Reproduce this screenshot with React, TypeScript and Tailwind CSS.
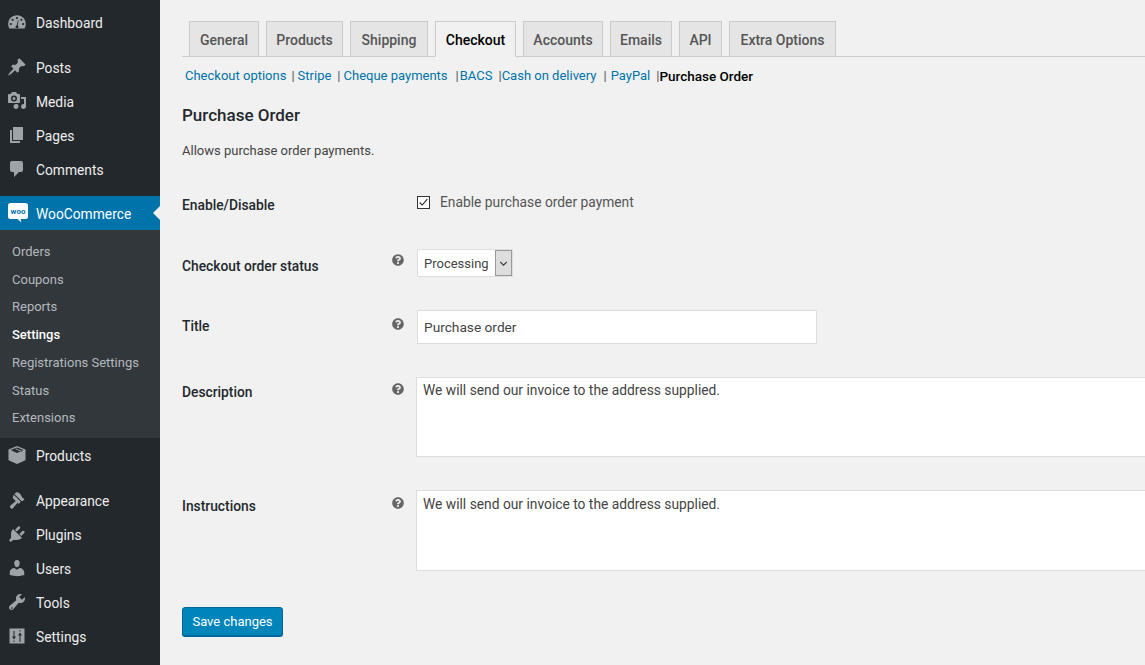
import React from "react";
import { FaQuestionCircle } from "react-icons/fa";

const S = "w-5 h-5 fill-[#9ea3a8]";
const Icons: Record<string, React.ReactNode> = {
  dashboard: (
    <svg viewBox="0 0 20 20" className={S}><path fillRule="evenodd" d="M10 3.2C5 3.2 1.2 7 1.2 12c0 1.7.5 3.3 1.3 4.6h15c.8-1.3 1.3-2.9 1.3-4.6 0-5-3.800-8.800-8.800-8.800zM10 5a1.100 1.100 0 110 2.200A1.100 1.100 0 0110 5zM5.600 6.700a1.100 1.100 0 110 2.200 1.100 1.100 0 010-2.200zm8.800 0a1.100 1.100 0 110 2.200 1.100 1.100 0 010-2.200zM3.800 11a1.100 1.100 0 110 2.200 1.100 1.100 0 010-2.200zm12.400 0a1.100 1.100 0 110 2.200 1.100 1.100 0 010-2.200zM11 8l.6.2-.9 5.400c.5.3.8.8.8 1.400 0 .5-.2.8-.5 1.100H9c-.3-.3-.5-.6-.5-1.100 0-.8.6-1.400 1.200-1.500z" /></svg>
  ),
  posts: (
    <svg viewBox="0 0 20 20" className={S}><path d="M10.440 3.020l1.820-1.820 6.360 6.350-1.830 1.820c-1.050-.68-2.480-.57-3.410.36l-.75.75c-.92.93-1.040 2.350-.35 3.410l-1.830 1.820-2.410-2.410-2.800 2.790c-.42.42-3.380 2.710-3.800 2.290s1.860-3.390 2.280-3.810l2.790-2.790L4.100 9.360l1.830-1.820c1.050.69 2.480.57 3.400-.36l.75-.75c.93-.92 1.050-2.350.36-3.410z" /></svg>
  ),
  media: (
    <svg viewBox="0 0 20 20" className={S}><path fillRule="evenodd" d="M13 11V4c0-.55-.45-1-1-1h-1.670L9 1H5L3.670 3H2c-.55 0-1 .45-1 1v7c0 .55.45 1 1 1h10c.55 0 1-.45 1-1zM7 4.500a3 3 0 110 6 3 3 0 010-6zM7 6a1.500 1.500 0 100 3 1.500 1.500 0 000-3zm7 0h5v9.500c0 1.400-1.100 2.500-2.500 2.500S14 16.900 14 15.500s1.100-2.500 2.500-2.500c.2 0 .3 0 .5.1V8h-3zM9.500 13c1.100 0 2 .9 2 2.300v.2c0 1.400-1.100 2.500-2.500 2.500S6.500 16.900 6.500 15.500 7.600 13 9 13z" /></svg>
  ),
  pages: (
    <svg viewBox="0 0 20 20" className={S}><path d="M6 15V2h10v13H6zm-1 1h8v2H3V5h2v11z" /></svg>
  ),
  comments: (
    <svg viewBox="0 0 20 20" className={S}><path d="M5 2h9c1.100 0 2 .9 2 2v7c0 1.100-.9 2-2 2h-2l-5 5v-5H5c-1.100 0-2-.9-2-2V4c0-1.100.9-2 2-2z" /></svg>
  ),
  products: (
    <svg viewBox="0 0 20 20" className={S}><path fillRule="evenodd" d="M10 1l8.500 3.600v10.600L10 19l-8.500-3.800V4.600zM3.600 5.100L10 7.900l6.400-2.800L10 2.600zM8 4l6.300 2.700 1-.5L9 3.500z" /></svg>
  ),
  appearance: (
    <svg viewBox="0 0 20 20" className={S}><path d="M14.480 11.060L7.410 3.990l1.500-1.500c.5-.56 2.300-.47 3.540.79 1.250 1.250 2.500 3.330 2.530 3.770.04.440 1.400 1.400 2.560 2.120l-1.800 1.800c-.3.020-1.260.090-1.260.090zM6.700 4.700l7.070 7.070-2.120 2.120-1.060-1.060c-.44.440-3.880 4.600-4.950 5.660-1.060 1.060-3.530-1.410-2.470-2.470 1.060-1.060 5.220-4.510 5.660-4.950L7.770 10.010 5.650 7.890z" /></svg>
  ),
  plugins: (
    <svg viewBox="0 0 20 20" className={S}><path d="M13.110 4.360L9.870 7.600 8 5.730l3.240-3.240c.35-.34 1.050-.2 1.560.32.520.51.660 1.210.31 1.550zm-8 1.770l.91-1.120 9.010 9.010-1.190.84c-.71.710-2.630 1.160-3.820 1.160H6.140L4.900 17.260c-.59.590-1.540.59-2.120 0-.59-.58-.59-1.530 0-2.120l1.240-1.240v-3.880c0-1.130.37-3.180 1.090-3.890zm7.260 3.970l3.240-3.240c.34-.35 1.040-.21 1.550.31.520.51.660 1.210.31 1.550l-3.240 3.250z" /></svg>
  ),
  users: (
    <svg viewBox="0 0 20 20" className={S}><path d="M10 9.250c-2.270 0-2.730-3.440-2.730-3.440C7 4.020 7.820 2 9.970 2c2.160 0 2.980 2.020 2.710 3.810 0 0-.41 3.440-2.680 3.440zm0 2.570L12.720 10c2.390 0 4.520 2.330 4.520 4.530v2.490s-3.650 1.130-7.240 1.130c-3.650 0-7.240-1.130-7.240-1.130v-2.490c0-2.250 1.940-4.480 4.470-4.480z" /></svg>
  ),
  tools: (
    <svg viewBox="0 0 20 20" className={S}><path fillRule="evenodd" d="M16.680 9.770c-1.340 1.340-3.300 1.670-4.950.99l-5.410 6.520c-.99.99-2.590.99-3.580 0s-.99-2.590 0-3.580l6.520-5.420c-.68-1.650-.35-3.610.99-4.950 1.280-1.280 3.120-1.640 4.720-1.080l-2.790 2.790 2.790 2.790 2.790-2.790c.56 1.600.2 3.440-1.080 4.730zM4.500 15.500a.8.800 0 101.100 1.100.8.800 0 00-1.100-1.100z" /></svg>
  ),
  settings: (
    <svg viewBox="0 0 20 20" className={S}><path fillRule="evenodd" d="M2.500 2.500h15v15h-15zM6.500 5v5.500H5l2 3 2-3H7.500V5zM7.500 14.500h-1V16h1zM12.500 4v1.500h1V4zM13 6.500l-2 3h1.500V16h1V9.500H15z" /></svg>
  ),
};

const Item = ({ icon, label }: { icon: string; label: string }) => (
  <div className="flex items-center h-[34px] pl-[7px] text-[13.800px] text-[#eeeeee]">
    <span className="w-[29px] flex items-center">{Icons[icon]}</span>
    <span className="pt-[2px]">{label}</span>
  </div>
);

const Tab = ({ label, w, active }: { label: string; w: string; active?: boolean }) => (
  <div
    className={`h-[36px] ${w} pt-[3px] flex items-center justify-center text-[14px] border border-[#cccccc] font-medium ${
      active ? "bg-[#f1f1f1] text-black border-b-[#f1f1f1]" : "bg-[#e5e5e5] text-[#555555]"
    }`}
  >
    {label}
  </div>
);

const Help = () => <FaQuestionCircle className="w-[12px] h-[12px] text-[#666666]" />;

const Sep = ({ ml, mr }: { ml: string; mr: string }) => (
  <span className={`${ml} ${mr} text-[#555555]`}>|</span>
);

const Row = ({ label, help, h, children, lt, ht = "" }: { label: string; help?: boolean; h: string; children: React.ReactNode; lt: string; ht?: string }) => (
  <div className={`flex ${h}`}>
    <div className={`w-[210px] shrink-0 font-medium text-[#23282d] text-[13.800px] ${lt}`}>{label}</div>
    <div className="w-[25px] shrink-0">{help && <div className={`h-[21px] flex items-center ${ht}`}><Help /></div>}</div>
    {children}
  </div>
);

export default function App() {
  return (
    <div
      className="flex w-[1145px] h-[665px] overflow-hidden bg-[#f1f1f1] text-[#444444]"
      style={{ fontFamily: 'Roboto, "Open Sans", sans-serif' }}
    >
      <aside className="w-[160px] shrink-0 bg-[#23282d] pt-[5px]">
        <Item icon="dashboard" label="Dashboard" />
        <div className="h-[11px]" />
        <Item icon="posts" label="Posts" />
        <Item icon="media" label="Media" />
        <Item icon="pages" label="Pages" />
        <Item icon="comments" label="Comments" />
        <div className="h-[10px]" />
        <div className="relative flex items-center h-[34px] pl-[8px] bg-[#0073aa] text-white text-[13.800px]">
          <span className="w-[28px] flex items-center">
            <svg viewBox="0 0 20 20" className="w-5 h-5">
              <path fill="#fff" d="M2.500 0h15A2.500 2.500 0 0120 2.500v11a2.500 2.500 0 01-2.500 2.500h-5l1 3.500-4-3.500h-7A2.500 2.500 0 010 13.500v-11A2.500 2.500 0 012.500 0z" />
              <text x="10" y="10.500" textAnchor="middle" fontSize="8" fontWeight="700" fill="#0073aa">woo</text>
            </svg>
          </span>
          <span className="pt-[2px]">WooCommerce</span>
          <span className="absolute right-0 top-[10px] w-0 h-0 border-y-[7px] border-y-transparent border-r-[7px] border-r-[#f1f1f1]" />
        </div>
        <div className="bg-[#32373c] h-[208px] pt-[8px] text-[13px] text-[#b4b9be]">
          {["Orders", "Coupons", "Reports", "Settings", "Registrations Settings", "Status", "Extensions"].map((s) => (
            <div key={s} className={`h-[27.700px] pl-[12px] flex items-center ${s === "Settings" ? "font-medium text-white" : ""}`}>{s}</div>
          ))}
        </div>
        <Item icon="products" label="Products" />
        <div className="h-[11px]" />
        <Item icon="appearance" label="Appearance" />
        <Item icon="plugins" label="Plugins" />
        <Item icon="users" label="Users" />
        <Item icon="tools" label="Tools" />
        <Item icon="settings" label="Settings" />
      </aside>

      <main className="flex-1 min-w-0 pl-[22px] pt-[21px] overflow-hidden">
        <div className="flex gap-[7px] pl-[7px] h-[35px] border-b border-[#cccccc] box-content">
          <Tab label="General" w="w-[70px]" />
          <Tab label="Products" w="w-[77px]" />
          <Tab label="Shipping" w="w-[78px]" />
          <Tab label="Checkout" w="w-[81px]" active />
          <Tab label="Accounts" w="w-[80px]" />
          <Tab label="Emails" w="w-[62px]" />
          <Tab label="API" w="w-[43px]" />
          <Tab label="Extra Options" w="w-[107px]" />
        </div>

        <div className="flex items-center h-[20px] mt-[9px] pl-[3px] text-[13px] text-[#0073aa] whitespace-nowrap">
          <span>Checkout options</span><Sep ml="ml-[5px]" mr="mr-[3px]" />
          <span>Stripe</span><Sep ml="ml-[6px]" mr="mr-[3px]" />
          <span>Cheque payments</span><Sep ml="ml-[8px]" mr="mr-[1px]" />
          <span>BACS</span><Sep ml="ml-[6px]" mr="mr-[0px]" />
          <span>Cash on delivery</span><Sep ml="ml-[7px]" mr="mr-[4px]" />
          <span>PayPal</span><Sep ml="ml-[6px]" mr="mr-[0px]" />
          <span className="font-medium text-black text-[13.500px]">Purchase Order</span>
        </div>

        <h2 className="mt-[17px] text-[17px] leading-[24px] font-medium text-[#23282d]">Purchase Order</h2>
        <p className="mt-[14px] text-[13px] leading-[20px]">Allows purchase order payments.</p>

        <div className="mt-[31px] flex flex-col">
          <Row label="Enable/Disable" h="h-[57px]" lt="mt-[3px]">
            <label className="flex items-center h-[20px] text-[13.800px] text-[#555555] whitespace-nowrap">
              <span className="w-[13px] h-[13px] border border-[#333333] bg-white flex items-center justify-center mr-[10px]">
                <svg viewBox="0 0 13 13" className="w-[11px] h-[11px]"><path d="M2 6.500l3 3 6-7" fill="none" stroke="#222222" strokeWidth="1.300" /></svg>
              </span>
              Enable purchase order payment
            </label>
          </Row>
          <Row label="Checkout order status" help h="h-[61px]" lt="mt-[7px]">
            <div className="flex h-[28px] w-[96px] border border-[#dddddd] bg-white text-[13px] items-center pl-[6px] pt-[1px] relative whitespace-nowrap">
              Processing
              <span className="absolute right-0 top-0 h-full w-[17px] bg-[#dddddd] border border-[#999999] flex items-center justify-center">
                <svg viewBox="0 0 10 10" className="w-[11px] h-[11px]"><path d="M2 3.500l3 3 3-3" fill="none" stroke="#333333" strokeWidth="1" /></svg>
              </span>
            </div>
          </Row>
          <Row label="Title" help h="h-[67px]" lt="mt-[6px]" ht="mt-[3px]">
            <div className="h-[34px] w-[400px] border border-[#dddddd] bg-white flex items-center pl-[6px] pt-[1px] text-[13.700px]">Purchase order</div>
          </Row>
          <Row label="Description" help h="h-[113px]" lt="mt-[5px]" ht="mt-[1px]">
            <div className="h-[80px] w-[800px] -ml-[1px] shrink-0 border border-[#dddddd] bg-white pl-[6px] pt-[2px] text-[13.800px] leading-[20px]">We will send our invoice to the address supplied.</div>
          </Row>
          <Row label="Instructions" help h="h-[117px]" lt="mt-[6px]" ht="mt-[2px]">
            <div className="h-[81px] w-[800px] -ml-[1px] shrink-0 border border-[#dddddd] bg-white pl-[6px] pt-[3px] text-[13.800px] leading-[20px]">We will send our invoice to the address supplied.</div>
          </Row>
        </div>
        <button className="h-[29px] w-[101px] rounded-[3px] bg-[#0085ba] border border-[#006799] text-white text-[13px] shadow-[0_1px_0_#006799]">Save changes</button>
      </main>
    </div>
  );
}
